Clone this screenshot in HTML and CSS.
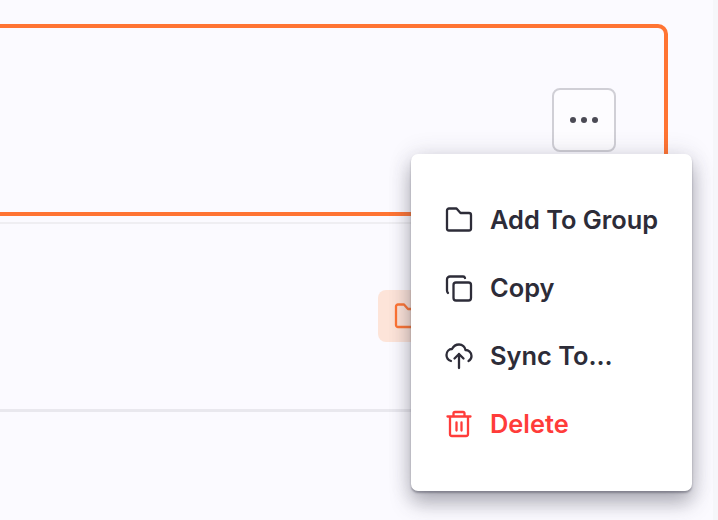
FILE: index.html
```html
<!DOCTYPE html>
<html lang="en">
<head>
  <meta charset="UTF-8" />
  <title>Rule list</title>
  <link rel="stylesheet" href="styles.css">
</head>
<body>
  <div class="page">
    <div class="list">
      <div class="row row-active">
        <button class="more-btn" title="More">
          <span class="dot"></span><span class="dot"></span><span class="dot"></span>
        </button>
      </div>
      <div class="row row-plain">
        <div class="tag-btn">
          <svg class="icon" viewBox="0 0 28 28"><path d="M3 4.500A2 2 0 0 1 5 2.500h6l4 4.500h8a2 2 0 0 1 2 2v14a2 2 0 0 1-2 2H5a2 2 0 0 1-2-2z"/></svg>
        </div>
      </div>
    </div>
    <div class="scroll-track"></div>
  </div>

  <ul class="menu">
    <li class="menu-item">
      <svg class="icon" viewBox="0 0 28 28"><path d="M2 4.500A2 2 0 0 1 4 2.500h7.500l4 4.500H24a2 2 0 0 1 2 2v13.500a2 2 0 0 1-2 2H4a2 2 0 0 1-2-2z"/></svg>
      <span class="menu-label">Add To Group</span>
    </li>
    <li class="menu-item">
      <svg class="icon" viewBox="0 0 28 28"><rect x="8.500" y="8.500" width="17.500" height="18" rx="2.500"/><path d="M20 4A2 2 0 0 0 18 2.500H5A3 3 0 0 0 2 5.500v11c0 1 .4 1.800 1 2.500"/></svg>
      <span class="menu-label">Copy</span>
    </li>
    <li class="menu-item">
      <svg class="icon" viewBox="0 0 28 28"><path d="M6 19C3 18 1.500 15.500 1.500 13 1.500 9.500 4 7 7 7c1.500-3 4-4.500 7-4.500 3.500 0 6 2.500 6.500 5.500 3 0 6 2.500 6 6 0 2-1 4-3 5"/><path d="M14 26V12M9.500 16.500 14 12l4.500 4.500"/></svg>
      <span class="menu-label">Sync To...</span>
    </li>
    <li class="menu-item menu-item-danger">
      <svg class="icon" viewBox="0 0 28 28"><path d="M2.500 6.500h23M8.500 6.500V3.500A1.500 1.500 0 0 1 10 2h8a1.500 1.500 0 0 1 1.500 1.500v3M5 6.500v17.500a2 2 0 0 0 2 2h14a2 2 0 0 0 2-2V6.500M11.500 12.500v8M16.500 12.500v8"/></svg>
      <span class="menu-label">Delete</span>
    </li>
  </ul>
</body>
</html>
```

FILE: styles.css
```css
:root {
  --bg-color: #fbfaff;
  --track-color: #f6f6fa;
  --accent-color: #ff7433;
  --text-color: #2d2c38;
  --danger-color: #ff3c3a;
}

* {
  box-sizing: border-box;
}

html, body {
  height: 100%;
}

body {
  margin: 0;
  overflow: hidden;
  background-color: var(--bg-color);
  font-family: 'Inter', sans-serif;
  color: var(--text-color);
}

.page {
  display: flex;
  justify-content: flex-end;
  height: 100%;
}

.list {
  flex: 1;
  padding: 24px 45px 0 0;
  margin-left: -12px;
}

.row {
  display: flex;
  justify-content: flex-end;
}

.row-active {
  height: 192px;
  padding: 60px 48px 0 0;
  border: 4px solid var(--accent-color);
  border-radius: 10px;
}

.row-plain {
  height: 190px;
  margin-top: 6px;
  padding: 66px 0 0 0;
  border-top: 2px solid #efeef2;
  border-bottom: 3px solid #e9e8ee;
}

.more-btn {
  display: flex;
  align-items: center;
  justify-content: center;
  gap: 4.5px;
  width: 64px;
  height: 64px;
  padding: 0;
  background-color: #fdfcff;
  border: 2px solid #d0cfd6;
  border-radius: 8px;
}

.dot {
  width: 6.500px;
  height: 6.500px;
  border-radius: 50%;
  background-color: #4b4a55;
}

.tag-btn {
  display: flex;
  align-items: center;
  width: 64px;
  height: 52px;
  margin-right: 226px;
  padding-left: 15px;
  background-color: #fde4d9;
  border-radius: 8px;
  color: var(--accent-color);
}

.scroll-track {
  width: 5px;
  background-color: var(--track-color);
}

.icon {
  flex: none;
  width: 28px;
  height: 28px;
  fill: none;
  stroke: currentColor;
  stroke-width: 2.3;
  stroke-linecap: round;
  stroke-linejoin: round;
}

.menu {
  position: absolute;
  top: 154px;
  left: 411px;
  width: 281px;
  height: 337px;
  margin: 0;
  padding: 32px 0 0 34px;
  list-style: none;
  background-color: #fff;
  border-radius: 7px;
  box-shadow: 0 2px 2px rgba(60, 60, 75, 0.4), 0 12px 20px rgba(60, 60, 75, 0.38), 0 0 24px rgba(60, 60, 75, 0.14);
}

.menu-item {
  display: flex;
  align-items: center;
  gap: 17px;
  height: 68px;
  font-size: 25.4px;
  font-weight: 600;
}

.menu-label {
  padding-bottom: 2px;
}

.menu-item-danger {
  color: var(--danger-color);
}
```
